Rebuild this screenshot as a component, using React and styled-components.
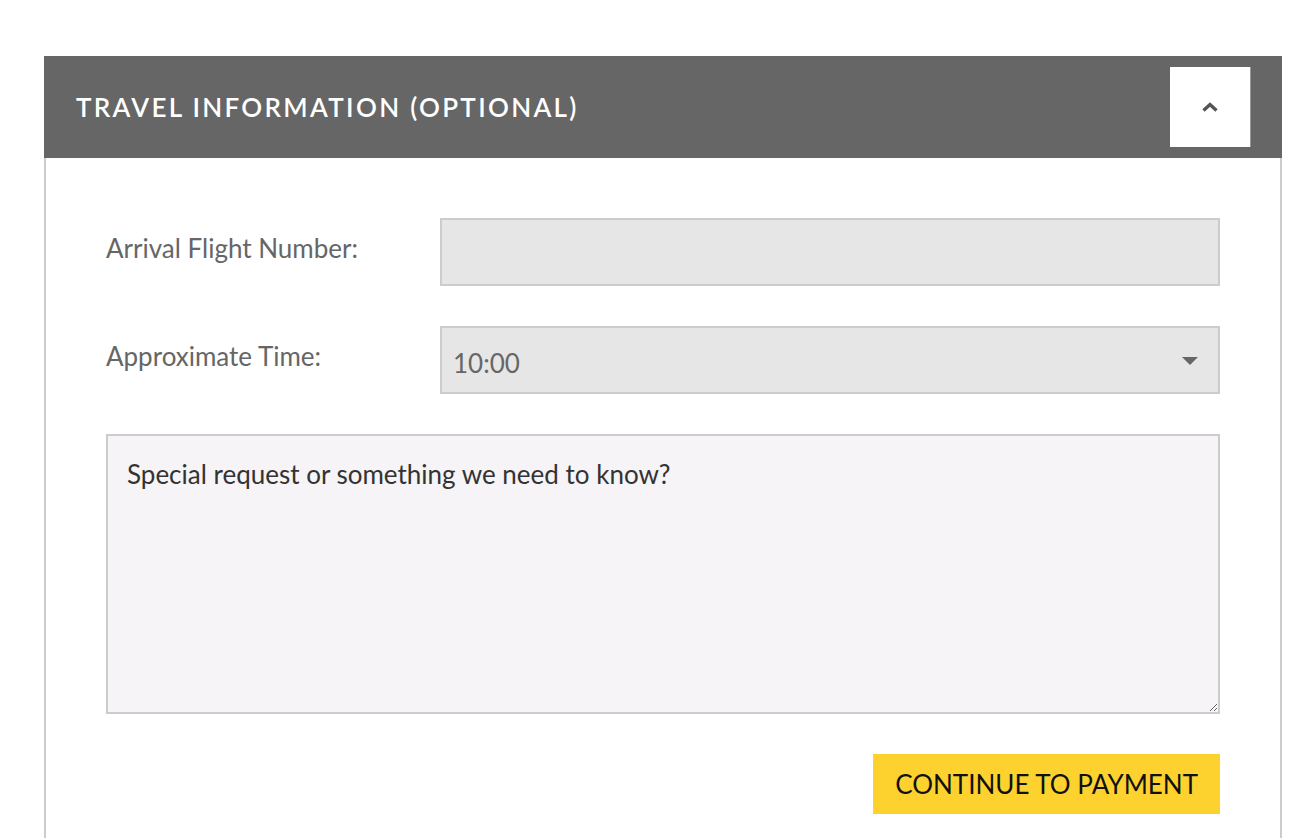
import styled, { createGlobalStyle } from "styled-components";

const GlobalStyle = createGlobalStyle`
  body {
    margin: 0;
    background: #ffffff;
    font-family: Lato, "Noto Sans", sans-serif;
  }
`;

const Page = styled.div`
  padding: 56px 34px 0 44px;
`;

const Panel = styled.section`
  width: 1238px;
`;

const Header = styled.div`
  display: flex;
  align-items: center;
  justify-content: space-between;
  height: 102px;
  padding: 0 32px 0 32px;
  box-sizing: border-box;
  background-color: #666666;
`;

const Title = styled.h2`
  margin: 0;
  color: #ffffff;
  font-size: 26px;
  font-weight: 600;
  letter-spacing: 2.3px;
`;

const ToggleButton = styled.button`
  display: flex;
  align-items: center;
  justify-content: center;
  width: 80px;
  height: 80px;
  padding: 0;
  border: none;
  background: #ffffff;
  box-shadow: 1px 0 0 #999;
  cursor: pointer;
`;

const Body = styled.div`
  display: flex;
  flex-direction: column;
  padding: 60px 60px 24px 60px;
  border-left: 2px solid #cccccc;
  border-right: 2px solid #cccccc;
  height: 680px;
  box-sizing: border-box;
`;

const Row = styled.div`
  display: flex;
  align-items: center;
  margin-bottom: 40px;
`;

const Label = styled.label`
  width: 334px;
  flex-shrink: 0;
  color: #666666;
  font-size: 26px;
  margin-top: -8px;
`;

const Field = styled.input`
  flex: 1;
  height: 68px;
  box-sizing: border-box;
  border: 2px solid #cccccc;
  background: #e6e6e6;
  font-family: inherit;
  font-size: 26px;
  color: #666;
  padding: 0 12px;
  outline: none;
`;

const SelectBox = styled.div`
  position: relative;
  flex: 1;
  display: flex;
  align-items: center;
  height: 68px;
  box-sizing: border-box;
  border: 2px solid #cccccc;
  background: #e6e6e6;
  padding: 6px 11px 0;
  font-size: 26px;
  color: #666666;
`;

const Caret = styled.span`
  position: absolute;
  right: 20px;
  top: 29px;
  width: 0;
  height: 0;
  border-left: 8px solid transparent;
  border-right: 8px solid transparent;
  border-top: 8px solid #666666;
`;

const Notes = styled.textarea`
  height: 280px;
  box-sizing: border-box;
  border: 2px solid #cccccc;
  background: #f6f4f6;
  padding: 22px 19px;
  font-family: inherit;
  font-size: 26px;
  color: #333333;
  resize: vertical;
  outline: none;
  &::placeholder {
    color: #333333;
    opacity: 1;
  }
`;

const Actions = styled.div`
  display: flex;
  justify-content: flex-end;
  margin-top: 40px;
`;

const PayButton = styled.button`
  height: 60px;
  padding: 0 22px;
  border: none;
  background: #fdd22f;
  color: #111111;
  font-family: inherit;
  font-size: 26px;
  cursor: pointer;
`;

export default function App() {
  return (
    <Page>
      <GlobalStyle />
      <Panel>
        <Header>
          <Title>TRAVEL INFORMATION (OPTIONAL)</Title>
          <ToggleButton aria-label="collapse">
            <svg width="20" height="12" viewBox="0 0 20 12">
              <path d="M3.5 9.5 L10 3.5 L16.5 9.5" fill="none" stroke="#555" strokeWidth="3.4" />
            </svg>
          </ToggleButton>
        </Header>
        <Body>
          <Row>
            <Label>Arrival Flight Number:</Label>
            <Field type="text" />
          </Row>
          <Row>
            <Label>Approximate Time:</Label>
            <SelectBox>
              10:00
              <Caret />
            </SelectBox>
          </Row>
          <Notes placeholder="Special request or something we need to know?" />
          <Actions>
            <PayButton>CONTINUE TO PAYMENT</PayButton>
          </Actions>
        </Body>
      </Panel>
    </Page>
  );
}
